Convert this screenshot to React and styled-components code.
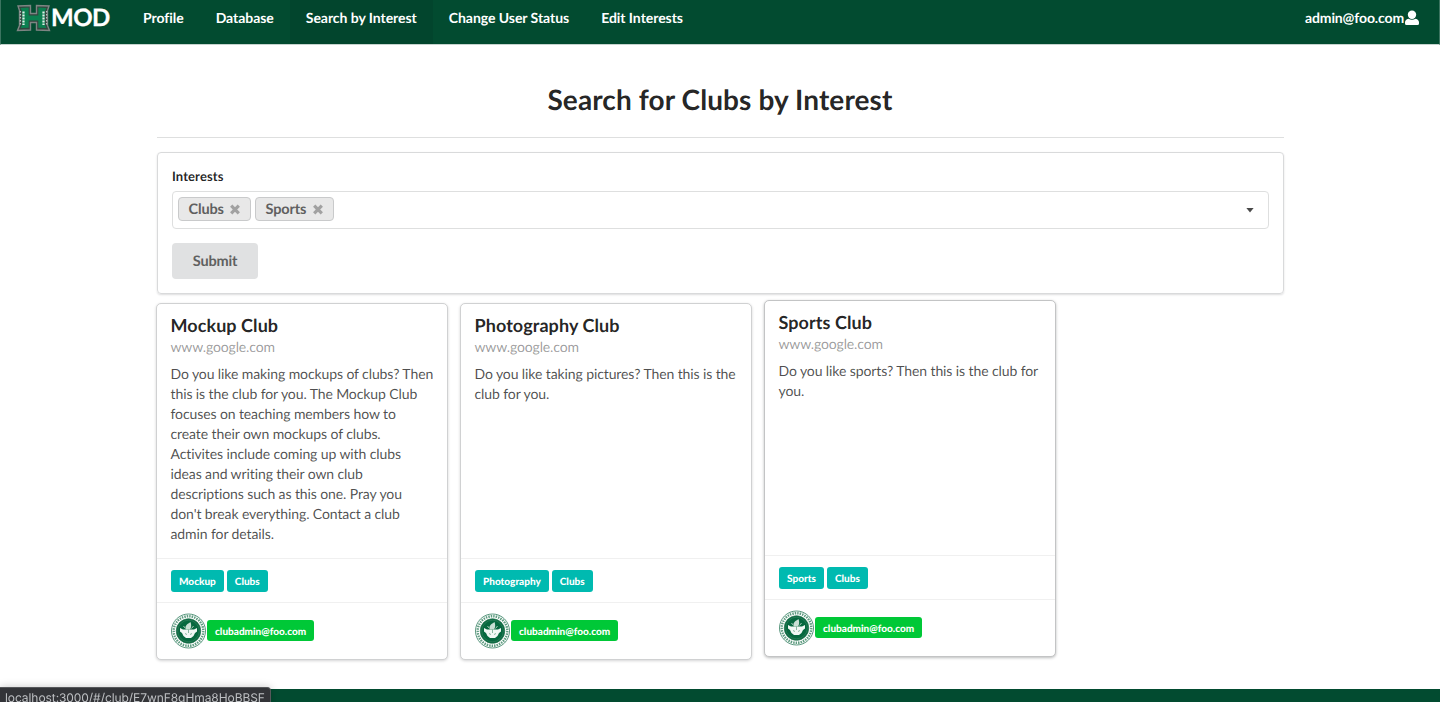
import React from "react";
import styled, { createGlobalStyle, css } from "styled-components";

const Global = createGlobalStyle`
  *, *::before, *::after { box-sizing: border-box; }
  body {
    margin: 0;
    background: #fff;
    color: rgba(0, 0, 0, 0.87);
    font: 14px/20px Lato, "Liberation Sans", sans-serif;
    text-rendering: geometricPrecision;
    font-variant-ligatures: none;
    overflow: hidden;
  }
  h1, h2, p { margin: 0; }
`;

const Page = styled.div`
  display: flex;
  flex-direction: column;
  height: 702px;
  overflow: hidden;
`;

const NavBar = styled.nav`
  display: flex;
  flex: none;
  height: 45px;
  background: #024b30;
  border: 1px solid #3c7460;
  border-top: 0;
  border-bottom-color: #c6d3ce;
  color: #fff;
`;

const Brand = styled.a`
  display: flex;
  align-items: center;
  height: 36px;
  width: 126px;
  padding-left: 15px;
  font-size: 24px;
  font-weight: 700;
  letter-spacing: -0.5px;
  -webkit-text-stroke: 0.3px #fff;
`;

const NavItem = styled.a`
  display: flex;
  height: 44px;
  padding: 8px 16px 0;
  font-weight: 700;
  font-size: 14px;
  line-height: 20px;
  letter-spacing: -0.045px;
  ${(p) => p.$active && css`background: #02452d;`}
`;

const Account = styled(NavItem)`
  margin-left: auto;
  padding-right: 20px;
  letter-spacing: -0.13px;
`;

const Container = styled.main`
  flex: none;
  width: 1127px;
  height: 644px;
  margin-left: 157px;
  padding-top: 37px;
`;

const Title = styled.h1`
  height: 56px;
  padding-right: 1px;
  border-bottom: 1px solid #dedfdf;
  font-size: 28px;
  line-height: 34px;
  font-weight: 700;
  letter-spacing: 0.1px;
  text-align: center;
`;

const Segment = styled.section`
  height: 142px;
  margin-top: 14px;
  padding: 14px;
  border: 1px solid #d9dadb;
  border-radius: 4px;
  box-shadow: 0 1px 2px rgba(34, 36, 38, 0.15);
`;

const FieldLabel = styled.label`
  display: block;
  height: 24px;
  font-size: 13px;
  line-height: 19px;
  font-weight: 700;
  letter-spacing: 0.1px;
`;

const Dropdown = styled.div`
  display: flex;
  gap: 4px;
  height: 38px;
  padding: 5px;
  border: 1px solid #dedfdf;
  border-radius: 4px;
`;

const Chip = styled.span`
  display: flex;
  align-items: center;
  justify-content: space-between;
  width: ${(p) => p.$width}px;
  height: 24px;
  padding: 0 9px 0 9.500px;
  border: 1px solid #c9cacb;
  border-radius: 4px;
  background: #e8e8e8;
  color: #5f5f5f;
  font-size: 14.500px;
  line-height: 22px;
  letter-spacing: -0.15px;
  font-weight: 700;
`;

const ChipText = styled.span`
  padding-top: 1px;
`;

const Caret = styled.span`
  align-self: center;
  width: 8px;
  height: 5px;
  margin: 0 9px 0 auto;
  background: #494949;
  clip-path: polygon(0 0, 100% 0, 50% 100%);
`;

const Submit = styled.button`
  display: block;
  width: 86px;
  height: 36px;
  margin-top: 14px;
  padding: 2px 0 0;
  border: 0;
  border-radius: 4px;
  background: #e0e1e2;
  color: #5f6060;
  font: 700 14.500px/20px Lato, "Liberation Sans", sans-serif;
  letter-spacing: -0.15px;
  text-rendering: inherit;
`;

const Cards = styled.div`
  display: flex;
  gap: 12px;
  margin: 9px 0 0 -1px;
`;

const Card = styled.article`
  display: flex;
  flex-direction: column;
  width: 292px;
  height: 357px;
  border: 1px solid ${(p) => (p.$raised ? "#c3c4c5" : "#d0d1d2")};
  border-radius: 5px;
  background: #fff;
  box-shadow: 0 1px 3px ${(p) => (p.$raised ? "#bcbdbd" : "#d4d4d5")};
  margin-top: ${(p) => (p.$raised ? -3 : 0)}px;
`;

const CardBody = styled.div`
  flex: 1;
  padding: 10px 13px 0 13.500px;
`;

const CardTitle = styled.h2`
  font-size: 18px;
  line-height: 22px;
  font-weight: 700;
  letter-spacing: 0.07px;
`;

const CardMeta = styled.p`
  margin-top: 1px;
  color: rgba(0, 0, 0, 0.4);
  line-height: 20px;
  letter-spacing: -0.14px;
`;

const CardText = styled.p`
  margin-top: 7px;
  color: rgba(0, 0, 0, 0.7);
  letter-spacing: -0.1px;
  white-space: nowrap;
`;

const CardExtra = styled.div`
  display: flex;
  align-items: center;
  gap: ${(p) => p.$gap}px;
  height: ${(p) => p.$height}px;
  padding: 0 14px;
  border-top: 1px solid #f0f0f0;
`;

const Tag = styled.span`
  height: 22px;
  padding: 0 8px;
  border-radius: 3px;
  background: ${(p) => (p.$green ? "#00c837" : "#00bab0")};
  color: #fff;
  font-size: 10px;
  line-height: 24px;
  font-weight: 900;
  white-space: nowrap;
`;

const AdminTag = styled(Tag)`
  height: 21px;
  line-height: 24px;
  margin-bottom: 1px;
`;

const Footer = styled.footer`
  flex: 1;
  background: #024b30;
`;

const StatusBubble = styled.div`
  position: fixed;
  left: 0;
  top: 687px;
  width: 271px;
  height: 20px;
  padding-left: 5px;
  border-top: 1px solid #56585b;
  border-right: 1px solid #56585b;
  border-radius: 0 4px 0 0;
  background: #333438;
  box-shadow: 0 0 9px rgba(0, 0, 0, 0.22);
  color: #bdbfc2;
  font: 12px/20px Inter, "Liberation Sans", sans-serif;
  letter-spacing: -0.07px;
  white-space: nowrap;
`;

function SchoolLogo() {
  return (
    <svg width="35" height="28" viewBox="0 0 35 28" fill="none">
      <path
        d="M2 2 14.500 1.500V9.500H20.500V1.500L33 2 31.500 6.500V21.500L33.500 26.500 20.500 26V18.500H14.500V26L1.500 26.500 3.500 21.500V6.500Z"
        fill="#33443e" stroke="#7d8583" strokeWidth="1.400"
      />
      <path
        d="M4.500 4 12.700 3.500V11.500H22.300V3.500L30.500 4 29 7V21L30.500 24 22.300 23.800V16.500H12.700V23.800L4.500 24 6 21V7Z"
        fill="#0b8050"
      />
      <path d="M7.500 7.500V21M27.500 7.500V21" stroke="#e2eee9" strokeWidth="2.200" strokeDasharray="2 1" />
      <path d="M4.400 7V21.500M30.600 7V21.500" stroke="#b4c3bd" strokeWidth="1.300" strokeDasharray="1.600 1.400" />
    </svg>
  );
}

function UserIcon() {
  return (
    <svg width="14" height="16" viewBox="0 0 14 16" fill="#fff" style={{ marginTop: 2, marginLeft: 1 }}>
      <circle cx="7" cy="4.800" r="4.200" />
      <path d="M3.500 8.700Q7 11 10.500 8.700C13 9.200 14 10.700 14 12.500V13.500Q14 15 12.500 15H1.500Q0 15 0 13.500V12.500C0 10.700 1 9.200 3.500 8.700Z" />
    </svg>
  );
}

function CloseIcon() {
  return (
    <svg width="12" height="11" viewBox="0 0 12 11" fill="none">
      <path d="M2.200 1.700 9.800 9.300M9.800 1.700 2.200 9.300" stroke="#a1a1a1" strokeWidth="3.200" />
    </svg>
  );
}

function Seal() {
  return (
    <svg width="36" height="36" viewBox="0 0 36 36" fill="none">
      <circle cx="17.500" cy="18" r="17" fill="#fff" stroke="#468b6f" strokeWidth="0.900" />
      <circle cx="17.500" cy="18" r="14.800" stroke="#5f9c81" strokeWidth="2.400" strokeDasharray="1.500 1" />
      <circle cx="17.500" cy="18" r="12.300" fill="#06683f" stroke="#27734f" strokeWidth="0.700" />
      <circle cx="17.500" cy="18" r="10.800" stroke="#428b69" strokeWidth="0.500" />
      <path d="M9 15 12 16.500H23L26 15 26 18.500 24 20 22.500 23 20 25H15L12.500 23 11 20 9 18.500Z" fill="#f1f7f4" />
      <path d="M15 16.500C13.500 13 15.500 11.500 19.500 9 20.500 12 20.500 14 19 16.500Z" fill="#c9dfd4" />
      <path d="M12.500 13 14.500 15.500M22.500 13 20.500 15.500" stroke="#a9cbb9" strokeWidth="1" />
      <path d="M17.500 16.500V20M14 20.500 16 21.500M21 20.500 19 21.500" stroke="#6fa78b" strokeWidth="0.800" />
    </svg>
  );
}

const NAV = ["Profile", "Database", "Search by Interest", "Change User Status", "Edit Interests"];

const CLUBS = [
  {
    name: "Mockup Club",
    text: [
      "Do you like making mockups of clubs? Then",
      "this is the club for you. The Mockup Club",
      "focuses on teaching members how to",
      "create their own mockups of clubs.",
      "Activites include coming up with clubs",
      "ideas and writing their own club",
      "descriptions such as this one. Pray you",
      "don't break everything. Contact a club",
      "admin for details.",
    ],
    tags: ["Mockup", "Clubs"],
  },
  {
    name: "Photography Club",
    text: ["Do you like taking pictures? Then this is the", "club for you."],
    tags: ["Photography", "Clubs"],
  },
  {
    name: "Sports Club",
    text: ["Do you like sports? Then this is the club for", "you."],
    tags: ["Sports", "Clubs"],
    raised: true,
  },
];

export default function App() {
  return (
    <Page>
      <Global />
      <NavBar>
        <Brand><SchoolLogo />MOD</Brand>
        {NAV.map((item) => (
          <NavItem key={item} $active={item === "Search by Interest"}>{item}</NavItem>
        ))}
        <Account>admin@foo.com<UserIcon /></Account>
      </NavBar>
      <Container>
        <Title>Search for Clubs by Interest</Title>
        <Segment>
          <FieldLabel>Interests</FieldLabel>
          <Dropdown>
            <Chip $width={73}><ChipText>Clubs</ChipText><CloseIcon /></Chip>
            <Chip $width={79}><ChipText>Sports</ChipText><CloseIcon /></Chip>
            <Caret />
          </Dropdown>
          <Submit>Submit</Submit>
        </Segment>
        <Cards>
          {CLUBS.map((club) => (
            <Card key={club.name} $raised={club.raised}>
              <CardBody>
                <CardTitle>{club.name}</CardTitle>
                <CardMeta>www.google.com</CardMeta>
                <CardText>
                  {club.text.map((line) => (
                    <React.Fragment key={line}>{line}<br /></React.Fragment>
                  ))}
                </CardText>
              </CardBody>
              <CardExtra $height={44} $gap={3}>
                {club.tags.map((tag) => <Tag key={tag}>{tag}</Tag>)}
              </CardExtra>
              <CardExtra $height={57} $gap={0}>
                <Seal />
                <AdminTag $green>clubadmin@foo.com</AdminTag>
              </CardExtra>
            </Card>
          ))}
        </Cards>
      </Container>
      <Footer />
      <StatusBubble>localhost:3000/#/club/E7wnF8gHma8HoBBSF</StatusBubble>
    </Page>
  );
}
